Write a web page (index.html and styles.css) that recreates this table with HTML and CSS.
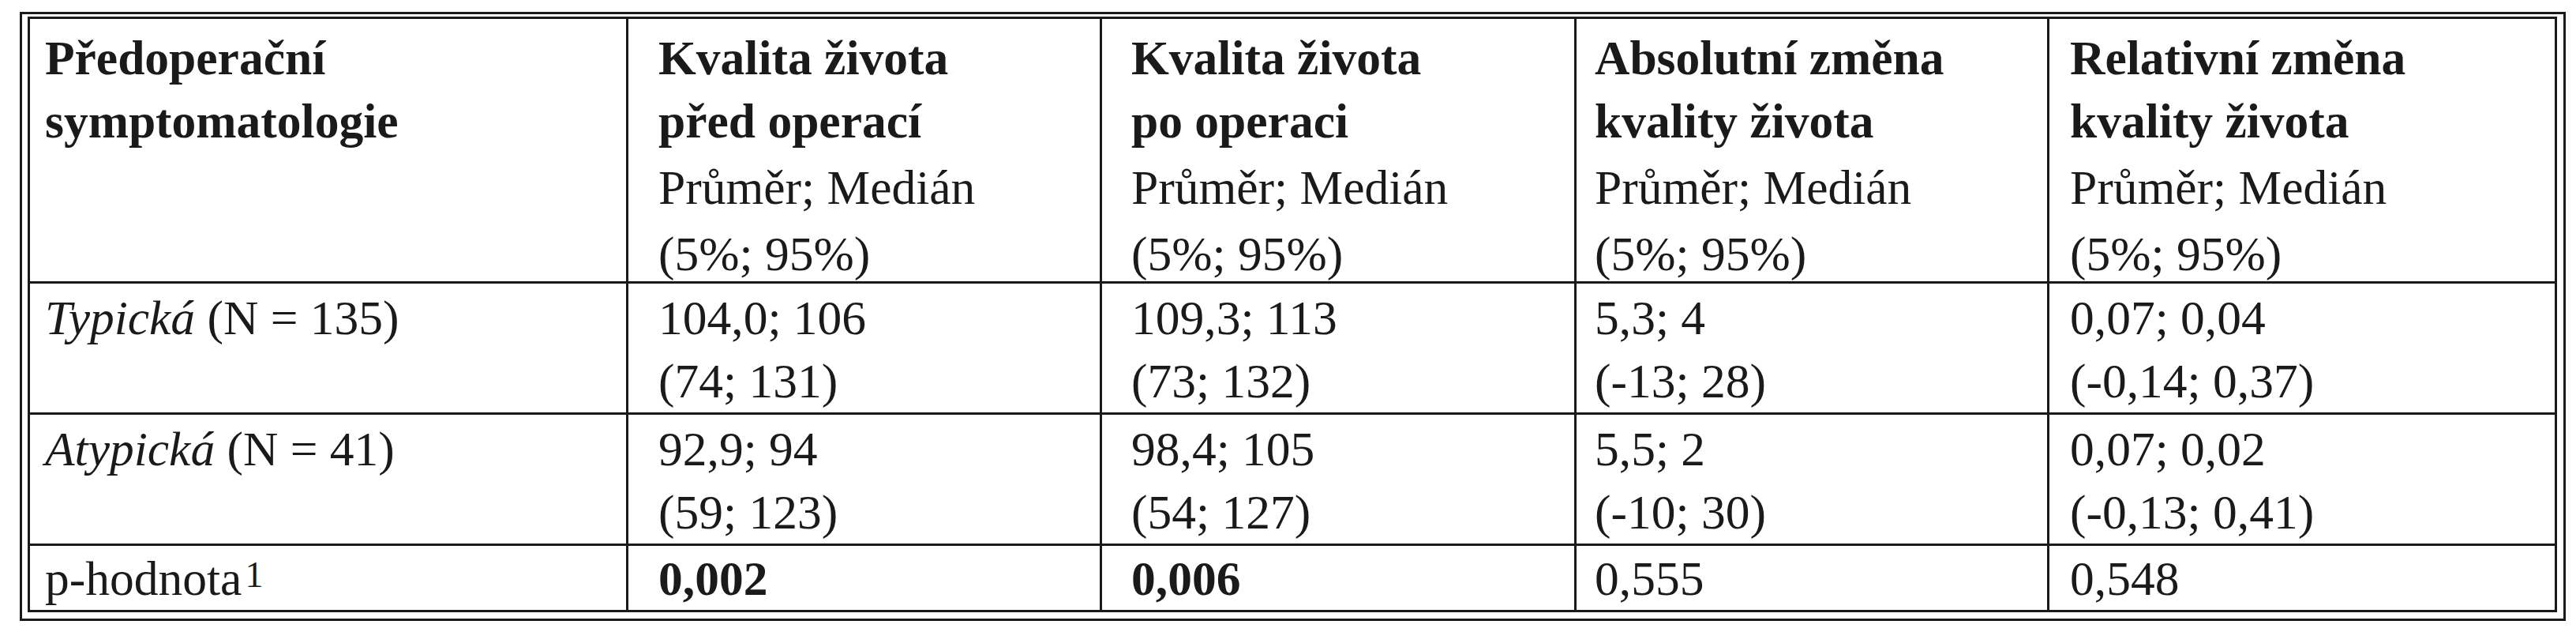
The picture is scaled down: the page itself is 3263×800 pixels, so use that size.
FILE: index.html
```html
<!DOCTYPE html>
<html lang="cs">
<head>
<meta charset="utf-8">
<title>Kvalita života</title>
<link rel="stylesheet" href="styles.css">
</head>
<body>
<div class="frame">
  <table class="data">
    <colgroup>
      <col class="w1"><col class="w2"><col class="w3"><col class="w4"><col class="w5">
    </colgroup>
    <thead>
      <tr>
        <th class="c1"><div class="title">Předoperační<br>symptomatologie</div></th>
        <th class="c2"><div class="title">Kvalita života<br>před operací</div><div class="sub">Průměr; Medián<br>(5%; 95%)</div></th>
        <th class="c3"><div class="title">Kvalita života<br>po operaci</div><div class="sub">Průměr; Medián<br>(5%; 95%)</div></th>
        <th class="c4"><div class="title">Absolutní změna<br>kvality života</div><div class="sub">Průměr; Medián<br>(5%; 95%)</div></th>
        <th class="c5"><div class="title">Relativní změna<br>kvality života</div><div class="sub">Průměr; Medián<br>(5%; 95%)</div></th>
      </tr>
    </thead>
    <tbody>
      <tr>
        <td class="c1"><i>Typická</i> (N = 135)</td>
        <td class="c2">104,0; 106<br>(74; 131)</td>
        <td class="c3">109,3; 113<br>(73; 132)</td>
        <td class="c4">5,3; 4<br>(-13; 28)</td>
        <td class="c5">0,07; 0,04<br>(-0,14; 0,37)</td>
      </tr>
      <tr>
        <td class="c1"><i>Atypická</i> (N = 41)</td>
        <td class="c2">92,9; 94<br>(59; 123)</td>
        <td class="c3">98,4; 105<br>(54; 127)</td>
        <td class="c4">5,5; 2<br>(-10; 30)</td>
        <td class="c5">0,07; 0,02<br>(-0,13; 0,41)</td>
      </tr>
      <tr class="last">
        <td class="c1">p-hodnota<sup class="note">1</sup></td>
        <td class="c2"><b>0,002</b></td>
        <td class="c3"><b>0,006</b></td>
        <td class="c4">0,555</td>
        <td class="c5">0,548</td>
      </tr>
    </tbody>
  </table>
</div>
</body>
</html>
```

FILE: styles.css
```css
html, body {
  margin: 0;
  padding: 0;
  background: #ffffff;
}

body {
  font-family: "Liberation Serif", "Times New Roman", serif;
  font-size: 61.5px;
  color: #1a1a1a;
}

.frame {
  box-sizing: border-box;
  width: 3225px;
  margin: 15px 0 0 25px;
  border: 3px solid #1a1a1a;
  padding: 3px 8px 8px 7px;
}

.data {
  table-layout: fixed;
  width: 3204px;
  border-collapse: separate;
  border-spacing: 0;
  border-top: 3px solid #1a1a1a;
  border-left: 3px solid #1a1a1a;
}

.w1 { width: 758px; }
.w2 { width: 600px; }
.w3 { width: 601px; }
.w4 { width: 599px; }
.w5 { width: 643px; }

.data th,
.data td {
  box-sizing: border-box;
  border-right: 3px solid #1a1a1a;
  border-bottom: 3px solid #1a1a1a;
  vertical-align: top;
  text-align: left;
  font-weight: normal;
  white-space: nowrap;
  line-height: 80px;
  padding-top: 3px;
  padding-bottom: 0;
  padding-right: 0;
}

.data th {
  padding-top: 9px;
}

.data .c1 { padding-left: 19px; }
.data .c2 { padding-left: 38px; }
.data .c3 { padding-left: 37px; }
.data .c4 { padding-left: 23px; }
.data .c5 { padding-left: 26px; }

.title {
  font-weight: bold;
  line-height: 80px;
}

.sub {
  line-height: 84px;
  margin-top: 2px;
  margin-bottom: -7px;
}

.last td {
  padding-top: 1px;
}

.note {
  font-size: 46px;
  line-height: 0;
  vertical-align: 10px;
  margin-left: 4px;
}
```
